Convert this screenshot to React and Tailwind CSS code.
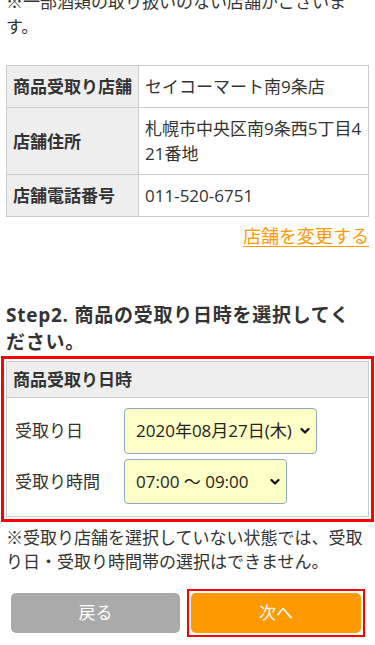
import React from "react";

const FONT = '"Open Sans", "Noto Sans CJK JP", sans-serif';

function Chevron() {
  return (
    <svg width="10" height="7" viewBox="0 0 10 7" className="pointer-events-none absolute right-[7px] top-1/2 -translate-y-1/2">
      <polyline points="1.5,1.5 5,5 8.5,1.5" fill="none" stroke="#111" strokeWidth="2.2" strokeLinecap="round" strokeLinejoin="round" />
    </svg>
  );
}

function Select({ value, w, h }) {
  return (
    <div className={`relative ${w} ${h}`}>
      <select
        defaultValue={value}
        className="h-full w-full appearance-none rounded-[4px] border border-[#8fa6c6] bg-[#ffffc8] pl-[11px] pr-[24px] text-[17px] text-[#222] outline-none"
        style={{ fontFamily: FONT }}
      >
        <option>{value}</option>
      </select>
      <Chevron />
    </div>
  );
}

export default function App() {
  return (
    <div
      className="h-[645px] w-[375px] overflow-hidden bg-white px-[6px] text-[17px] text-[#333]"
      style={{ fontFamily: FONT }}
    >
      <p className="mt-[-11px] leading-[25px]">※一部酒類の取り扱いのない店舗がございます。</p>

      <table className="mt-[26px] w-full border-collapse border border-[#ccc] leading-[25px]">
        <tbody>
          <tr>
            <th className="w-[131px] whitespace-nowrap border border-[#ccc] bg-[#eee] px-[6px] py-[8px] text-left font-bold">商品受取り店舗</th>
            <td className="border border-[#ccc] px-[6px] py-[8px]">セイコーマート南9条店</td>
          </tr>
          <tr>
            <th className="border border-[#ccc] bg-[#eee] px-[6px] py-[8px] text-left font-bold">店舗住所</th>
            <td className="border border-[#ccc] px-[6px] py-[8px] break-all">札幌市中央区南9条西5丁目421番地</td>
          </tr>
          <tr>
            <th className="border border-[#ccc] bg-[#eee] px-[6px] py-[8px] text-left font-bold">店舗電話番号</th>
            <td className="border border-[#ccc] px-[6px] py-[8px]">011-520-6751</td>
          </tr>
        </tbody>
      </table>

      <div className="mt-[7px] text-right text-[18px] leading-[25px]">
        <a className="text-[#ff9900] underline underline-offset-[3px]">店舗を変更する</a>
      </div>

      <h2 className="mt-[53px] text-[19px] font-bold leading-[27px] tracking-[0.75px] text-[#333]">
        Step2. 商品の受取り日時を選択してください。
      </h2>

      <div className="mx-[-5px] border-[3px] border-[#ff0000] p-[2px]">
        <div className="border border-[#ccc]">
          <div className="border-b border-[#ccc] bg-[#eee] px-[6px] py-[5px] font-bold leading-[25px]">商品受取り日時</div>
          <div className="flex flex-col gap-[5px] pb-[12px] pl-[8px] pt-[10px]">
            <div className="flex items-center">
              <div className="w-[109px]">受取り日</div>
              <Select value="2020年08月27日(木)" w="w-[193px]" h="h-[46px]" />
            </div>
            <div className="flex items-center">
              <div className="w-[109px]">受取り時間</div>
              <Select value="07:00 ～ 09:00" w="w-[163px]" h="h-[45px]" />
            </div>
          </div>
        </div>
      </div>

      <p className="mt-[4px] leading-[24px]">※受取り店舗を選択していない状態では、受取り日・受取り時間帯の選択はできません。</p>

      <div className="mt-[15px] flex items-center">
        <button className="ml-[5px] h-[40px] w-[169px] rounded-[5px] bg-[#aaa] text-[17px] text-white">戻る</button>
        <div className="ml-[7px] border-2 border-[#ff0000] p-[2px]">
          <button className="block h-[40px] w-[170px] rounded-[5px] bg-[#ff9900] text-[17px] text-white">次へ</button>
        </div>
      </div>
    </div>
  );
}
